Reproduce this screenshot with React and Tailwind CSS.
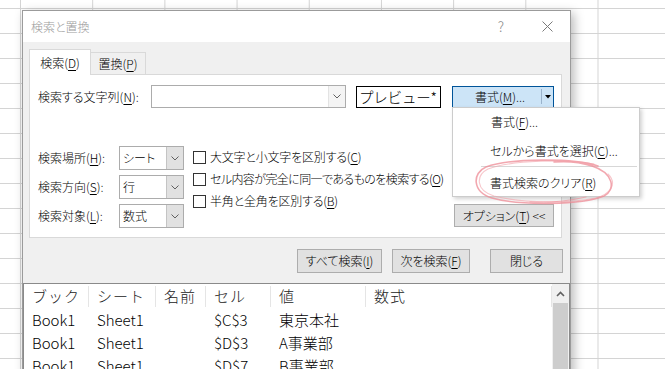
import React from "react";

const U = ({ children }) => (
  <span className="underline underline-offset-[2px] decoration-[1px]">{children}</span>
);

function Chevron({ color = "#606060" }) {
  return (
    <svg width="8" height="5" viewBox="0 0 8 5">
      <polyline points="0.5,0.5 4,4 7.5,0.5" fill="none" stroke={color} strokeWidth="1" />
    </svg>
  );
}

function SmallCombo({ text }) {
  return (
    <div className="flex h-[24px] w-[65px] border border-[#acacac] bg-white">
      <div className="flex flex-1 items-center pl-[3px] text-[12px]">{text}</div>
      <div className="flex w-[17px] items-center justify-center border-l border-[#c4c4c4] bg-[#e1e1e1]">
        <Chevron />
      </div>
    </div>
  );
}

function Check({ children, tight }) {
  return (
    <div className="flex h-[22px] items-center gap-[4px] whitespace-nowrap">
      <span className="h-[13px] w-[13px] shrink-0 border border-[#333333] bg-white" />
      <span className={`text-[12px] ${tight ? "tracking-[-0.6px]" : "tracking-[-0.2px]"}`}>{children}</span>
    </div>
  );
}

function Btn({ w, children }) {
  return (
    <div
      className={`flex h-[24px] items-center justify-center whitespace-nowrap border border-[#adadad] bg-[#e1e1e1] text-[12px] ${w}`}
    >
      {children}
    </div>
  );
}

const cols = [
  { w: "w-[65px]", h: "ブック" },
  { w: "w-[67px]", h: "シート" },
  { w: "w-[50px]", h: "名前" },
  { w: "w-[65px]", h: "セル" },
  { w: "w-[95px]", h: "値" },
  { w: "flex-1", h: "数式" },
];

const rows = [
  ["Book1", "Sheet1", "", "$C$3", "東京本社", ""],
  ["Book1", "Sheet1", "", "$D$3", "A事業部", ""],
  ["Book1", "Sheet1", "", "$D$7", "B事業部", ""],
];

export default function App() {
  return (
    <div className="relative h-[369px] w-[665px] overflow-hidden bg-white bg-[linear-gradient(to_right,#d4d4d4_1px,transparent_1px),linear-gradient(to_bottom,#d4d4d4_1px,transparent_1px)] [background-size:72.2px_25px] [background-position:20px_8px] font-['Noto_Sans_CJK_JP','Noto_Sans',sans-serif] font-light text-black [font-feature-settings:'palt']">
      {/* Dialog window */}
      <div className="absolute left-[22px] top-[10px] flex h-[380px] w-[549px] flex-col border border-[#9b9b9b] bg-[#f0f0f0] shadow-[3px_3px_10px_rgba(0,0,0,0.28)]">
        {/* Title bar */}
        <div className="flex h-[31px] items-center bg-white pl-[8px]">
          <span className="text-[12px] text-[#9a9a9a]">検索と置換</span>
          <div className="ml-auto flex h-full">
            <div className="flex w-[46px] items-center justify-center text-[14px] text-[#8c8c8c]">?</div>
            <div className="flex w-[46px] items-center justify-center">
              <svg width="11" height="11" viewBox="0 0 11 11">
                <path d="M0.5 0.5 L10.5 10.5 M10.5 0.5 L0.5 10.5" stroke="#7a7a7a" strokeWidth="1" />
              </svg>
            </div>
          </div>
        </div>

        {/* Body */}
        <div className="flex flex-col pl-[6px] pr-[7px] pt-[7px]">
          {/* Tabs */}
          <div className="flex h-[25px] items-end">
            <div className="relative z-10 -mb-px flex h-[26px] w-[62px] items-center justify-center border-l border-r border-t border-[#d9d9d9] bg-white text-[12px]">
              検索(<U>D</U>)
            </div>
            <div className="flex h-[22px] w-[55px] items-center justify-center border-r border-t border-[#d9d9d9] bg-[#f0f0f0] text-[12px]">
              置換(<U>P</U>)
            </div>
          </div>

          {/* Panel */}
          <div className="flex h-[164px] w-[533px] flex-col border border-[#d9d9d9] bg-white pl-[8px] pr-[7px] pt-[10px]">
            <div className="flex h-[23px] items-center">
              <div className="w-[113px] whitespace-nowrap text-[12px]">
                検索する文字列(<U>N</U>):
              </div>
              <div className="flex h-[23px] w-[195px] border border-[#acacac] bg-white">
                <div className="flex-1" />
                <div className="flex w-[17px] items-center justify-center border-l border-[#e3e3e3] bg-[#f4f4f4]">
                  <Chevron />
                </div>
              </div>
              <div className="ml-[10px] flex h-[22px] w-[85px] items-center overflow-hidden whitespace-nowrap border border-black pl-[2px] text-[14.5px] tracking-[-0.2px] [font-feature-settings:normal]">
                プレビュー*
              </div>
              <div className="ml-[11px] flex h-[22px] w-[102px] items-center border border-[#005499] bg-[#cce4f7]">
                <div className="flex flex-1 items-center justify-center whitespace-nowrap pl-[6px] text-[12px]">
                  書式(<U>M</U>)...
                </div>
                <div className="h-[15px] w-px bg-[#9ab3cc]" />
                <div className="flex w-[11px] items-center justify-center">
                  <svg width="6" height="4" viewBox="0 0 6 4">
                    <polygon points="0,0 6,0 3,3.5" fill="#000" />
                  </svg>
                </div>
              </div>
            </div>

            <div className="mt-[38px] flex">
              <div className="flex shrink-0 flex-col gap-[5px]">
                <div className="flex items-center">
                  <div className="w-[81px] whitespace-nowrap text-[12px]">
                    検索場所(<U>H</U>):
                  </div>
                  <SmallCombo text="シート" />
                </div>
                <div className="flex items-center">
                  <div className="w-[81px] whitespace-nowrap text-[12px]">
                    検索方向(<U>S</U>):
                  </div>
                  <SmallCombo text="行" />
                </div>
                <div className="flex items-center">
                  <div className="w-[81px] whitespace-nowrap text-[12px]">
                    検索対象(<U>L</U>):
                  </div>
                  <SmallCombo text="数式" />
                </div>
              </div>
              <div className="ml-[9px] flex shrink-0 flex-col">
                <Check>
                  大文字と小文字を区別する(<U>C</U>)
                </Check>
                <Check tight>
                  セル内容が完全に同一であるものを検索する(<U>O</U>)
                </Check>
                <Check>
                  半角と全角を区別する(<U>B</U>)
                </Check>
              </div>
              <div className="mb-px ml-auto shrink-0 self-end">
                <div className="flex h-[23px] w-[100px] items-center justify-center whitespace-nowrap border border-[#adadad] bg-[#e1e1e1] text-[12px]">
                  オプション(<U>T</U>)&nbsp;&lt;&lt;
                </div>
              </div>
            </div>
          </div>

          {/* Buttons */}
          <div className="mt-[11px] flex justify-end">
            <Btn w="w-[85px]">
              すべて検索(<U>I</U>)
            </Btn>
            <div className="ml-[10px]">
              <Btn w="w-[78px]">
                次を検索(<U>F</U>)
              </Btn>
            </div>
            <div className="ml-[20px]">
              <Btn w="w-[73px]">閉じる</Btn>
            </div>
          </div>
        </div>

        {/* Results list */}
        <div className="mt-[10px] flex flex-1 border border-[#8a8a8a] bg-white text-[15px] [font-feature-settings:normal]">
          <div className="flex flex-1 flex-col">
            <div className="flex h-[25px] items-center text-[#222222]">
              {cols.map((c, i) => (
                <div
                  key={i}
                  className={`flex h-[21px] items-center border-r border-[#e5e5e5] pl-[8px] tracking-[1px] ${c.w}`}
                >
                  {c.h}
                </div>
              ))}
            </div>
            {rows.map((r, ri) => (
              <div key={ri} className="flex h-[23px] items-center">
                {r.map((v, ci) => (
                  <div key={ci} className={`pl-[8px] ${cols[ci].w}`}>
                    {v}
                  </div>
                ))}
              </div>
            ))}
          </div>
          <div className="flex w-[17px] flex-col bg-[#f0f0f0]">
            <div className="flex h-[19px] items-center justify-center">
              <svg width="9" height="6" viewBox="0 0 9 6">
                <polyline points="1,5 4.5,1.5 8,5" fill="none" stroke="#606060" strokeWidth="1.6" />
              </svg>
            </div>
            <div className="mx-px flex-1 bg-[#cdcdcd]" />
          </div>
        </div>
      </div>

      {/* Dropdown menu */}
      <div className="absolute left-[452px] top-[107px] flex h-[90px] w-[188px] flex-col border border-[#cccccc] bg-white pt-px text-[12px] shadow-[2px_2px_4px_rgba(0,0,0,0.18)]">
        <div className="flex h-[26px] items-center whitespace-nowrap pl-[38px]">
          書式(<U>F</U>)...
        </div>
        <div className="mt-[3px] flex h-[26px] items-center whitespace-nowrap pl-[37px]">
          セルから書式を選択(<U>C</U>)...
        </div>
        <div className="ml-[28px] mr-[2px] mt-[2px] h-px bg-[#d7d7d7]" />
        <div className="mt-[3px] flex h-[26px] items-center whitespace-nowrap pl-[37px]">
          書式検索のクリア(<U>R</U>)
        </div>
      </div>

      {/* Hand-drawn highlight */}
      <svg
        className="pointer-events-none absolute left-[470px] top-[156px]"
        width="150"
        height="52"
        viewBox="0 0 150 52"
      >
        <path
          d="M128 10 C104 2 40 2 16 11 C2 17 2 36 22 42 C50 50 112 49 134 40 C146 34 144 17 122 10 C110 6 96 5 84 6"
          fill="none"
          stroke="#ee8a94"
          strokeWidth="1.6"
          strokeOpacity="0.75"
          strokeLinecap="round"
        />
        <path
          d="M124 8 C98 3 42 4 18 13 C6 19 5 34 24 40 C56 48 100 47 126 42 C140 38 148 28 138 18"
          fill="none"
          stroke="#f2a0a8"
          strokeWidth="1.1"
          strokeOpacity="0.6"
          strokeLinecap="round"
        />
        <path
          d="M60 46 C80 47 98 45 116 41"
          fill="none"
          stroke="#ee8a94"
          strokeWidth="1.2"
          strokeOpacity="0.6"
          strokeLinecap="round"
        />
      </svg>
    </div>
  );
}
